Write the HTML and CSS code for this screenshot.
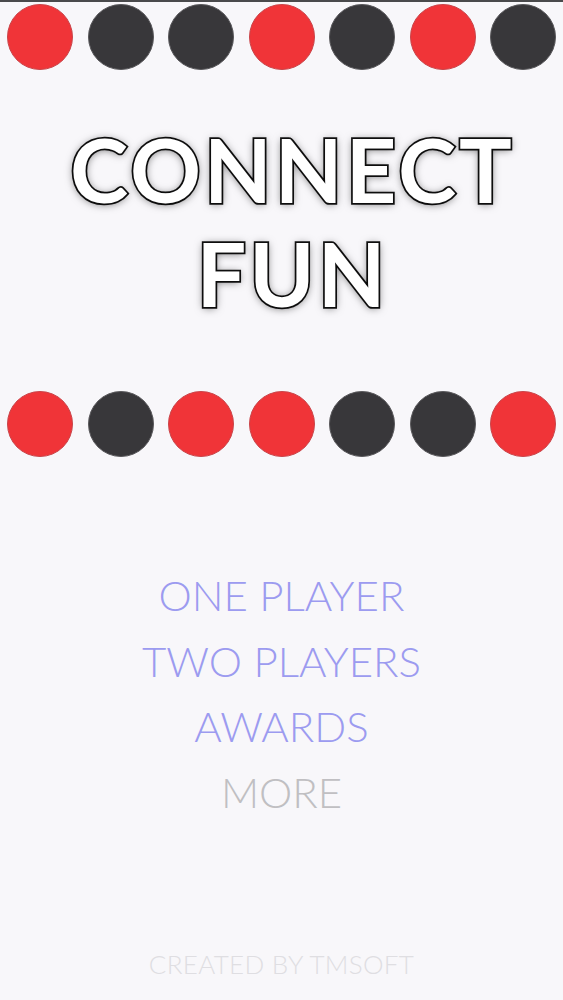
FILE: index.html
```html
<!DOCTYPE html>
<html lang="en">
<head>
  <meta charset="UTF-8">
  <meta name="viewport" content="width=device-width, initial-scale=1.0">
  <title>Connect Fun</title>
  <link rel="stylesheet" href="styles.css">
</head>
<body>
  <div class="screen">
    <div class="row row-top">
      <span class="disc red"></span>
      <span class="disc dark"></span>
      <span class="disc dark"></span>
      <span class="disc red"></span>
      <span class="disc dark"></span>
      <span class="disc red"></span>
      <span class="disc dark"></span>
    </div>

    <h1 class="title">CONNECT<br>FUN</h1>

    <div class="row row-bottom">
      <span class="disc red"></span>
      <span class="disc dark"></span>
      <span class="disc red"></span>
      <span class="disc red"></span>
      <span class="disc dark"></span>
      <span class="disc dark"></span>
      <span class="disc red"></span>
    </div>

    <nav class="menu">
      <a href="#">ONE PLAYER</a>
      <a href="#">TWO PLAYERS</a>
      <a href="#">AWARDS</a>
      <a href="#" class="muted">MORE</a>
    </nav>

    <div class="credit">CREATED BY TMSOFT</div>
  </div>
</body>
</html>
```
FILE: styles.css
```css
html, body {
  margin: 0;
  height: 100%;
}
body {
  background-color: #f8f7fa;
  font-family: Lato, "Open Sans", sans-serif;
}
.screen {
  height: 1000px;
  box-sizing: border-box;
  border-top: 2px solid #4a4a4c;
  display: flex;
  flex-direction: column;
  align-items: center;
}
.row {
  width: 100%;
  box-sizing: border-box;
  padding: 0 7px;
  display: flex;
  justify-content: space-between;
}
.row-top {
  margin-top: 2px;
}
.row-bottom {
  margin-top: 66px;
}
.disc {
  width: 66px;
  height: 66px;
  border-radius: 50%;
  box-sizing: border-box;
}
.red {
  background-color: #f03438;
  border: 1px solid #c9454a;
}
.dark {
  background-color: #38373a;
  border: 1px solid #5a595c;
}
/* title is drawn a touch right of centre */
.title {
  margin: 47px 0 0;
  padding-left: 22px;
  font-size: 88px;
  font-weight: 700;
  line-height: 104px;
  letter-spacing: 3px;
  text-align: center;
  color: #fff;
  -webkit-text-stroke: 3.5px #111;
  paint-order: stroke fill;
  text-shadow: 0 1px 8px rgba(0, 0, 0, 0.55);
}
.menu {
  margin-top: 106px;
  display: flex;
  flex-direction: column;
  align-items: center;
}
.menu a {
  font-size: 42px;
  font-weight: 300;
  line-height: 65.5px;
  color: #9c9bf0;
  text-decoration: none;
}
.menu a.muted {
  color: #c0bfc2;
}
.credit {
  margin-top: auto;
  margin-bottom: 20px;
  font-size: 26px;
  font-weight: 300;
  letter-spacing: 0.3px;
  color: #dfdee2;
}
```
